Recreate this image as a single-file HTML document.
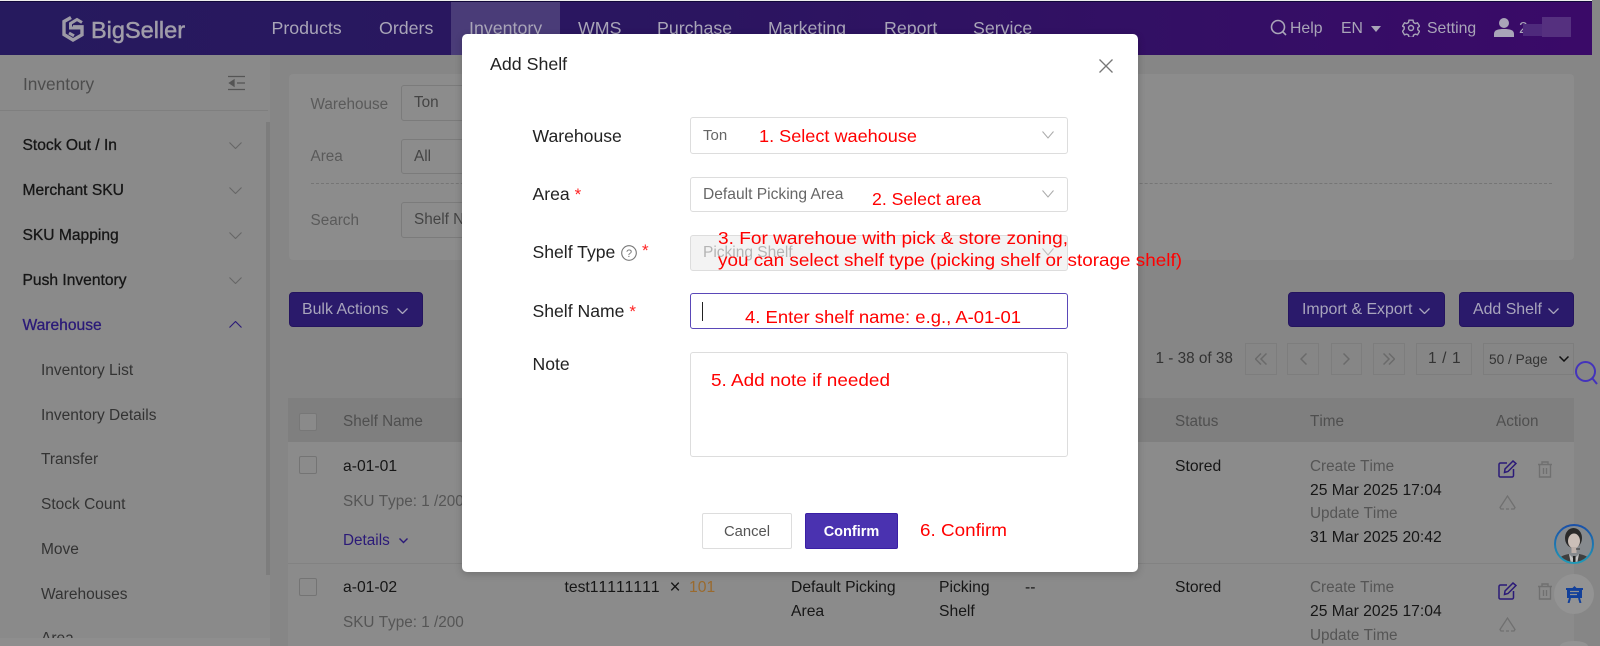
<!DOCTYPE html>
<html><head><meta charset="utf-8"><title>Add Shelf</title>
<style>
html,body{margin:0;padding:0;width:1600px;height:646px;overflow:hidden;background:#868686;font-family:"Liberation Sans",sans-serif}
#p{position:relative;width:1600px;height:646px;overflow:hidden;background:#868686;contain:paint}
.a{position:absolute;box-sizing:border-box}
.t{position:absolute;height:20px;line-height:20px;white-space:nowrap}
.nav{font-size:17.8px;color:#a9a5b8;top:18px}
.s1{font-size:15.6px;color:#161616;left:22.5px;-webkit-text-stroke:.3px #161616}
.s2{font-size:15.5px;color:#333;left:41px}
.f{font-size:15.3px;color:#555}
.box{border:1px solid #7b7b7b;border-radius:3px}
.btn{background:#2a1a6b;border:1px solid #24145f;border-radius:4px;top:292px;height:35px}
.bt{font-size:15.9px;color:#a8a5bc;top:300px}
.pg{border:1px solid #7d7d7d;top:343px;height:32px}
.g{font-size:15.3px;color:#555;font-kerning:none}
.d{font-size:15.7px;color:#161616;font-kerning:none}
.l{font-size:17.6px;color:#222;left:532.5px}
.in{border:1px solid #ddd;border-radius:3px;left:690px;width:378px;background:#fff}
.v{font-size:15px;color:#666;left:703px}
.star{color:#f22;font-size:17px}
svg{position:absolute}
</style></head><body><div id="p">

<!-- top bar -->
<div class="a" style="left:0;top:0;width:1592px;height:1px;background:#eee"></div>
<div class="a" style="left:0;top:1px;width:1592px;height:54px;background:linear-gradient(90deg,#261a5e 0%,#2b1560 45%,#3a0a68 100%);border-top:1px solid #12093a"></div>
<div class="a" style="left:451px;top:2px;width:109px;height:53px;background:#4a3c78"></div>
<svg style="left:61px;top:15px" width="24" height="29" viewBox="0 0 24 29" fill="none" stroke="#9d9aa6" stroke-width="3.4"><path d="M10 2.5 3 6.5v13l9 5.5 9-5.2v-8l-9 0"/><path d="M21 7.5 16 4.5 9.5 8.5v4.5l11 0" stroke-width="3"/><path d="M8 18l5 2.8" stroke-width="3"/></svg>
<div class="t" style="left:91px;top:20px;font-size:23.5px;color:#a09da9;-webkit-text-stroke:.5px #a09da9">BigSeller</div>
<div class="t nav" style="left:271.5px">Products</div>
<div class="t nav" style="left:379px">Orders</div>
<div class="t nav" style="left:469px">Inventory</div>
<div class="t nav" style="left:578px">WMS</div>
<div class="t nav" style="left:657px">Purchase</div>
<div class="t nav" style="left:768px">Marketing</div>
<div class="t nav" style="left:884px">Report</div>
<div class="t nav" style="left:973px">Service</div>
<svg style="left:1270px;top:19px" width="18" height="18" fill="none" stroke="#a9a5b8" stroke-width="1.6"><circle cx="8" cy="8" r="6.5"/><path d="M12.6 12.6 16 16"/></svg>
<div class="t" style="left:1290px;top:19px;font-size:15.8px;color:#a9a5b8">Help</div>
<div class="t" style="left:1341px;top:19px;font-size:15.8px;color:#a9a5b8">EN</div>
<svg style="left:1371px;top:26px" width="10" height="6"><path d="M0 0h10L5 6z" fill="#a9a5b8"/></svg>
<svg style="left:1402px;top:19px" width="18" height="18" viewBox="0 0 18 18" fill="none" stroke="#a9a5b8" stroke-width="1.4"><path d="M7 1.2h4l.5 2.3 1.8 1 2.2-.7 2 3.4-1.7 1.6v2l1.7 1.6-2 3.4-2.2-.7-1.8 1-.5 2.2H7l-.5-2.2-1.8-1-2.2.7-2-3.4L2.2 10V8L.5 7.2l2-3.4 2.3.7 1.7-1z"/><circle cx="9" cy="9" r="2.5"/></svg>
<div class="t" style="left:1427px;top:19px;font-size:15.8px;color:#a9a5b8">Setting</div>
<svg style="left:1494px;top:17px" width="20" height="20"><circle cx="10" cy="6" r="5" fill="#a9a5b8"/><path d="M0 20v-3c0-4 4-5 10-5s10 1 10 5v3z" fill="#a9a5b8"/></svg>
<div class="t" style="left:1519px;top:19px;font-size:15.5px;color:#a9a5b8">2</div>
<div class="a" style="left:1523px;top:24px;width:20px;height:12px;background:#4e2a7c"></div>
<div class="a" style="left:1542px;top:17px;width:29px;height:20px;background:#55307f"></div>

<!-- sidebar -->
<div class="a" style="left:0;top:55px;width:270px;height:591px;background:#8a8a8a"></div>
<div class="a" style="left:0;top:110px;width:268px;height:1px;background:#7f7f7f"></div>
<div class="t" style="left:23px;top:74px;font-size:17.3px;color:#4d4d4d">Inventory</div>
<svg style="left:228px;top:75px" width="18" height="16" stroke="#555" fill="none" stroke-width="1.3"><path d="M0 1.5h17M0 14.5h17M9 8h8"/><path d="M6 5 1.5 8 6 11z" fill="#555"/></svg>
<div class="a" style="left:266px;top:122px;width:4px;height:453px;background:#7d7d7d"></div>
<div class="a" style="left:0;top:638px;width:270px;height:8px;background:#8e8e8e"></div>
<div class="t s1" style="top:136px">Stock Out / In</div>
<div class="t s1" style="top:181px">Merchant SKU</div>
<div class="t s1" style="top:226px">SKU Mapping</div>
<div class="t s1" style="top:271px">Push Inventory</div>
<div class="t s1" style="top:316px;color:#2b1a78;-webkit-text-stroke:.3px #2b1a78">Warehouse</div>
<svg style="left:229px;top:142px" width="13" height="7" fill="none" stroke="#666" stroke-width="1.1"><path d="M.5.5 6.5 6.5 12.5.5"/></svg>
<svg style="left:229px;top:187px" width="13" height="7" fill="none" stroke="#666" stroke-width="1.1"><path d="M.5.5 6.5 6.5 12.5.5"/></svg>
<svg style="left:229px;top:232px" width="13" height="7" fill="none" stroke="#666" stroke-width="1.1"><path d="M.5.5 6.5 6.5 12.5.5"/></svg>
<svg style="left:229px;top:277px" width="13" height="7" fill="none" stroke="#666" stroke-width="1.1"><path d="M.5.5 6.5 6.5 12.5.5"/></svg>
<svg style="left:229px;top:321px" width="13" height="7" fill="none" stroke="#2b1a78" stroke-width="1.1"><path d="M.5 6.5 6.5.5 12.5 6.5"/></svg>
<div class="t s2" style="top:361px">Inventory List</div>
<div class="t s2" style="top:406px">Inventory Details</div>
<div class="t s2" style="top:450px">Transfer</div>
<div class="t s2" style="top:495px">Stock Count</div>
<div class="t s2" style="top:540px">Move</div>
<div class="t s2" style="top:585px">Warehouses</div>
<div class="t s2" style="top:629px;height:9px;overflow:hidden">Area</div>

<!-- filter panel -->
<div class="a" style="left:289px;top:74px;width:1285px;height:186px;background:#8c8c8c;border-radius:4px"></div>
<div class="t f" style="left:310.5px;top:95px;color:#5a5a5a">Warehouse</div>
<div class="a box" style="left:401px;top:85px;width:70px;height:36px"></div>
<div class="t f" style="left:414px;top:93px;color:#444">Ton</div>
<div class="t f" style="left:310.5px;top:147px;color:#5a5a5a">Area</div>
<div class="a box" style="left:401px;top:139px;width:70px;height:35px"></div>
<div class="t f" style="left:414px;top:147px;color:#444">All</div>
<div class="a" style="left:311px;top:183px;width:1241px;height:0;border-top:1px dashed #757575"></div>
<div class="t f" style="left:310.5px;top:211px;color:#5a5a5a">Search</div>
<div class="a box" style="left:401px;top:202px;width:70px;height:36px"></div>
<div class="t f" style="left:414px;top:210px;color:#444">Shelf N</div>

<!-- action buttons -->
<div class="a btn" style="left:289px;width:134px"></div>
<div class="t bt" style="left:302px">Bulk Actions</div>
<svg style="left:397px;top:308px" width="11" height="6" fill="none" stroke="#a8a5bc" stroke-width="1.3"><path d="M.5.5 5.5 5.5 10.5.5"/></svg>
<div class="a btn" style="left:1288px;width:157px"></div>
<div class="t bt" style="left:1302px">Import &amp; Export</div>
<svg style="left:1419px;top:308px" width="11" height="6" fill="none" stroke="#a8a5bc" stroke-width="1.3"><path d="M.5.5 5.5 5.5 10.5.5"/></svg>
<div class="a btn" style="left:1459px;width:115px"></div>
<div class="t bt" style="left:1473px">Add Shelf</div>
<svg style="left:1548px;top:308px" width="11" height="6" fill="none" stroke="#a8a5bc" stroke-width="1.3"><path d="M.5.5 5.5 5.5 10.5.5"/></svg>

<!-- pagination -->
<div class="t" style="left:1155.5px;top:349px;font-size:15.3px;color:#333;font-kerning:none">1 - 38 of 38</div>
<div class="a pg" style="left:1245px;width:32px"></div>
<div class="a pg" style="left:1287px;width:32px"></div>
<div class="a pg" style="left:1331px;width:31px"></div>
<div class="a pg" style="left:1373px;width:32px"></div>
<div class="a pg" style="left:1416px;width:56px"></div>
<div class="a pg" style="left:1483px;width:91px"></div>
<svg style="left:1255px;top:353px" width="12" height="12" fill="none" stroke="#6a6a6a" stroke-width="1.5"><path d="M6 .5.5 6 6 11.5M11.5.5 6 6l5.5 5.5"/></svg>
<svg style="left:1300px;top:353px" width="7" height="12" fill="none" stroke="#6a6a6a" stroke-width="1.5"><path d="M6.5.5 1 6l5.5 5.5"/></svg>
<svg style="left:1343px;top:353px" width="7" height="12" fill="none" stroke="#6a6a6a" stroke-width="1.5"><path d="M.5.5 6 6 .5 11.5"/></svg>
<svg style="left:1383px;top:353px" width="12" height="12" fill="none" stroke="#6a6a6a" stroke-width="1.5"><path d="M.5.5 6 6 .5 11.5M6 .5 11.5 6 6 11.5"/></svg>
<div class="t" style="left:1428px;top:349px;font-size:15.5px;color:#333;letter-spacing:.6px">1 / 1</div>
<div class="t" style="left:1489px;top:350px;font-size:13.7px;color:#333">50 / Page</div>
<svg style="left:1559px;top:356px" width="10" height="6" fill="none" stroke="#111" stroke-width="1.5"><path d="M.5.5 5 5 9.5.5"/></svg>
<svg style="left:1575px;top:361px" width="23" height="24" fill="none" stroke="#4433bb" stroke-width="2"><circle cx="10.5" cy="10.5" r="9.5"/><path d="M17.5 17.5 22 23"/></svg>

<!-- table -->
<div class="a" style="left:288px;top:398px;width:1286px;height:44px;background:#7f7f7f"></div>
<div class="a" style="left:288px;top:442px;width:1286px;height:204px;background:#8b8b8b"></div>
<div class="a" style="left:288px;top:563px;width:1286px;height:1px;background:#828282"></div>
<div class="a" style="left:299px;top:413px;width:18px;height:18px;background:#8a8a8a;border:1px solid #777;border-radius:2px"></div>
<div class="t g" style="left:343px;top:412px;color:#4f4f4f">Shelf Name</div>
<div class="t g" style="left:1175px;top:412px;color:#4f4f4f">Status</div>
<div class="t g" style="left:1310px;top:412px;color:#4f4f4f">Time</div>
<div class="t g" style="left:1496px;top:412px;color:#4f4f4f">Action</div>

<div class="a" style="left:299px;top:456px;width:18px;height:18px;border:1px solid #747474;border-radius:2px"></div>
<div class="t d" style="left:343px;top:457px">a-01-01</div>
<div class="t g" style="left:343px;top:492px">SKU Type: 1 /200</div>
<div class="t" style="left:343px;top:531px;font-size:15.3px;color:#2b1a78">Details</div>
<svg style="left:399px;top:538px" width="9" height="6" fill="none" stroke="#2b1a78" stroke-width="1.4"><path d="M.5.5 4.5 4.5 8.5.5"/></svg>
<div class="t d" style="left:1175px;top:457px">Stored</div>
<div class="t g" style="left:1310px;top:457px">Create Time</div>
<div class="t d" style="left:1310px;top:481px">25 Mar 2025 17:04</div>
<div class="t g" style="left:1310px;top:504px">Update Time</div>
<div class="t d" style="left:1310px;top:528px">31 Mar 2025 20:42</div>

<div class="a" style="left:299px;top:578px;width:18px;height:18px;border:1px solid #747474;border-radius:2px"></div>
<div class="t d" style="left:343px;top:578px">a-01-02</div>
<div class="t g" style="left:343px;top:613px">SKU Type: 1 /200</div>
<div class="t d" style="left:564.5px;top:578px">test11111111</div>
<div class="t d" style="left:669.5px;top:578px;font-size:19px">×</div>
<div class="t d" style="left:689px;top:578px;color:#9a6a2e">101</div>
<div class="t d" style="left:791px;top:578px">Default Picking</div>
<div class="t d" style="left:791px;top:602px">Area</div>
<div class="t d" style="left:939px;top:578px">Picking</div>
<div class="t d" style="left:939px;top:602px">Shelf</div>
<div class="t d" style="left:1025px;top:578px">--</div>
<div class="t d" style="left:1175px;top:578px">Stored</div>
<div class="t g" style="left:1310px;top:578px">Create Time</div>
<div class="t d" style="left:1310px;top:602px">25 Mar 2025 17:04</div>
<div class="t g" style="left:1310px;top:626px">Update Time</div>

<svg style="left:1498px;top:460px" width="19" height="18" fill="none" stroke="#2b1a78" stroke-width="1.5"><path d="M9 3H2.5a1.5 1.5 0 0 0-1.5 1.5v11.500a1.5 1.5 0 0 0 1.5 1H14a1.5 1.5 0 0 0 1.5-1.5V9"/><path d="M6.5 12.500 7 9 15 1l3 2.5-8 8z"/></svg>
<svg style="left:1538px;top:461px" width="14" height="17" fill="none" stroke="#707070" stroke-width="1.4"><path d="M0 3.5h14M4 3.5V1h6v2.5M1.5 3.5V16h11V3.5M5.5 7v6M8.5 7v6"/></svg>
<svg style="left:1499px;top:495px" width="17" height="15" fill="none" stroke="#707070" stroke-width="1.3"><path d="M5 14H2L1 12.5 8.5 1 16 12.5 15 14h-3M7 14h3"/></svg>
<svg style="left:1498px;top:582px" width="19" height="18" fill="none" stroke="#2b1a78" stroke-width="1.5"><path d="M9 3H2.5a1.5 1.5 0 0 0-1.5 1.5v11.500a1.5 1.5 0 0 0 1.5 1H14a1.5 1.5 0 0 0 1.5-1.5V9"/><path d="M6.5 12.500 7 9 15 1l3 2.5-8 8z"/></svg>
<svg style="left:1538px;top:583px" width="14" height="17" fill="none" stroke="#707070" stroke-width="1.4"><path d="M0 3.5h14M4 3.5V1h6v2.5M1.5 3.5V16h11V3.5M5.5 7v6M8.5 7v6"/></svg>
<svg style="left:1499px;top:617px" width="17" height="15" fill="none" stroke="#707070" stroke-width="1.3"><path d="M5 14H2L1 12.5 8.5 1 16 12.5 15 14h-3M7 14h3"/></svg>

<!-- floating -->
<svg style="left:1554px;top:524px" width="40" height="40" viewBox="0 0 40 40">
<defs><linearGradient id="r" x1="0" y1="0" x2="0" y2="1"><stop offset="0" stop-color="#1a50a8"/><stop offset="1" stop-color="#1f9ab8"/></linearGradient><clipPath id="c"><circle cx="20" cy="20" r="18"/></clipPath></defs>
<circle cx="20" cy="20" r="19" fill="#868a8e" stroke="url(#r)" stroke-width="2"/>
<g clip-path="url(#c)"><path d="M3 40c1-7 6-9 12-10l5 10 5-10c6 1 11 3 12 10z" fill="#3f3f3f"/><path d="M15 30l5 5 5-5-2 10h-6z" fill="#c2c2c2"/><rect x="19" y="32" width="2.5" height="8" fill="#222"/><ellipse cx="19.5" cy="14" rx="8.5" ry="10" fill="#2a2a2a"/><ellipse cx="20" cy="17" rx="6" ry="7.5" fill="#cbbfb8"/><rect x="17.5" y="23" width="5" height="6" fill="#bdb0aa"/><path d="M22 25h4" stroke="#333" stroke-width="1"/></g></svg>
<div class="a" style="left:1554px;top:574px;width:40px;height:40px;border-radius:50%;background:#939393"></div>
<svg style="left:1566px;top:586px" width="17" height="17" viewBox="0 0 17 17"><path d="M8.5 0l2 2h6.5v2h-1v8H1V4H0V2h6.500z" fill="#12409a"/><path d="M4 5.5h9M4 8.5h7" stroke="#939393" stroke-width="1.3"/><path d="M4 12l-1.5 5M13 12l1.5 5" stroke="#12409a" stroke-width="2"/></svg>
<div class="a" style="left:1560px;top:641px;width:28px;height:5px;border-radius:14px 14px 0 0 / 5px 5px 0 0;background:#939393"></div>

<!-- modal -->
<div class="a" style="left:462px;top:34px;width:676px;height:538px;background:#fff;border-radius:5px;box-shadow:0 2px 8px rgba(0,0,0,.2)"></div>
<div class="t" style="left:490px;top:54px;font-size:17.8px;color:#222">Add Shelf</div>
<svg style="left:1099px;top:59px" width="14" height="14" fill="none" stroke="#777" stroke-width="1.3"><path d="M.5.5 13.5 13.5M13.5.5.5 13.5"/></svg>

<div class="t l" style="top:126px">Warehouse</div>
<div class="t l" style="top:184px">Area <span class="star">*</span></div>
<div class="t l" style="top:242px">Shelf Type</div>
<svg style="left:621px;top:245px" width="16" height="16" fill="none" stroke="#777" stroke-width="1.1"><circle cx="8" cy="8" r="7.3"/><text x="8" y="12" font-size="11" text-anchor="middle" fill="#777" stroke="none" font-family="Liberation Sans, sans-serif">?</text></svg>
<div class="t star" style="left:642px;top:241px">*</div>
<div class="t l" style="top:301px">Shelf Name <span class="star">*</span></div>
<div class="t l" style="top:354px">Note</div>

<div class="a in" style="top:117px;height:37px"></div>
<div class="a in" style="top:177px;height:35px"></div>
<div class="a in" style="top:235px;height:36px;background:#f3f3f3"></div>
<div class="a in" style="top:293px;height:36px;border-color:#5a48b8"></div>
<div class="a in" style="top:352px;height:105px"></div>
<div class="a" style="left:702px;top:302px;width:1px;height:19px;background:#222"></div>
<div class="t v" style="top:126px">Ton</div>
<div class="t v" style="top:185px;font-size:15.6px">Default Picking Area</div>
<div class="t v" style="top:243px;font-size:15.5px;color:#b4b4b4">Picking Shelf</div>
<svg style="left:1042px;top:131px" width="12" height="8" fill="none" stroke="#aaa" stroke-width="1"><path d="M.5.5 6 7 11.5.5"/></svg>
<svg style="left:1042px;top:190px" width="12" height="8" fill="none" stroke="#aaa" stroke-width="1"><path d="M.5.5 6 7 11.5.5"/></svg>
<svg style="left:1042px;top:248px" width="12" height="8" fill="none" stroke="#bbb" stroke-width="1"><path d="M.5.5 6 7 11.5.5"/></svg>

<div class="a" style="left:702px;top:513px;width:90px;height:36px;background:#fff;border:1px solid #ddd;border-radius:2px"></div>
<div class="t" style="left:702px;top:522px;width:90px;text-align:center;font-size:14.8px;color:#555">Cancel</div>
<div class="a" style="left:805px;top:513px;width:93px;height:36px;background:#4a32b0;border:1px solid #3a1fa5;border-radius:2px"></div>
<div class="t" style="left:805px;top:522px;width:93px;text-align:center;font-size:14.5px;color:#fff;font-weight:bold">Confirm</div>

<!-- red annotations -->
<svg style="left:0;top:0" width="1600" height="646" font-family="Liberation Sans, sans-serif" font-size="17.5" fill="#f00">
<text x="759" y="142" textLength="158" lengthAdjust="spacingAndGlyphs">1. Select waehouse</text>
<text x="872" y="205" textLength="109" lengthAdjust="spacingAndGlyphs">2. Select area</text>
<text x="718" y="244" textLength="350" lengthAdjust="spacingAndGlyphs">3. For warehoue with pick &amp; store zoning,</text>
<text x="718" y="266" textLength="464" lengthAdjust="spacingAndGlyphs">you can select shelf type (picking shelf or storage shelf)</text>
<text x="745" y="323" textLength="276" lengthAdjust="spacingAndGlyphs">4. Enter shelf name: e.g., A-01-01</text>
<text x="711" y="386" textLength="179" lengthAdjust="spacingAndGlyphs">5. Add note if needed</text>
<text x="920" y="536" textLength="87" lengthAdjust="spacingAndGlyphs">6. Confirm</text>
</svg>
</div></body></html>
